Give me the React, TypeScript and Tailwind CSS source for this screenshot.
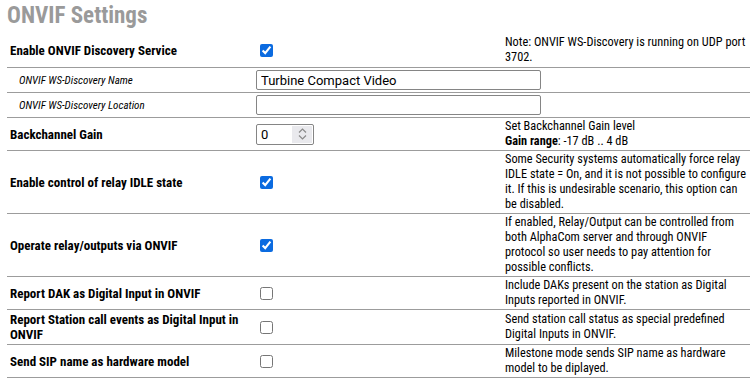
import React from "react";

const F = { fontFamily: '"Roboto Condensed", "Liberation Sans Narrow", Roboto, sans-serif' };

type Row = {
  label: string;
  sub?: boolean;
  control: React.ReactNode;
  desc?: React.ReactNode;
};

const Check = ({ on }: { on: boolean }) => (
  <input type="checkbox" defaultChecked={on} className="m-0 ml-[4px] block h-[13px] w-[13px] accent-[#0b6be0]" />
);

const rows: Row[] = [
  {
    label: "Enable ONVIF Discovery Service",
    control: <Check on />,
    desc: "Note: ONVIF WS-Discovery is running on UDP port 3702.",
  },
  {
    label: "ONVIF WS-Discovery Name",
    sub: true,
    control: (
      <input
        type="text"
        defaultValue="Turbine Compact Video"
        className="block h-[20px] w-[285px] rounded-[2px] border border-[#858585] px-[4px] text-[13px] text-black"
        style={{ fontFamily: "Roboto, sans-serif" }}
      />
    ),
  },
  {
    label: "ONVIF WS-Discovery Location",
    sub: true,
    control: (
      <input
        type="text"
        className="block h-[20px] w-[285px] rounded-[2px] border border-[#858585] px-[4px] text-[13px] text-black"
        style={{ fontFamily: "Roboto, sans-serif" }}
      />
    ),
  },
  {
    label: "Backchannel Gain",
    control: (
      <div className="flex h-[21px] w-[58px] items-center rounded-[2px] border border-[#858585] pl-[4px] pr-[1px]" style={{ fontFamily: "Roboto, sans-serif" }}>
        <span className="flex-1 text-[13px] text-black">0</span>
        <span className="flex h-[17px] w-[20px] flex-col items-center justify-center bg-[#e9e9ed]">
          <svg width="9" height="14" viewBox="0 0 9 14" fill="none" stroke="#8a8a8a" strokeWidth="1.2">
            <path d="M1 5.5 L4.5 2 L8 5.5" />
            <path d="M1 8.5 L4.5 12 L8 8.5" />
          </svg>
        </span>
      </div>
    ),
    desc: (
      <>
        Set Backchannel Gain level
        <br />
        <b>Gain range</b>: -17 dB .. 4 dB
      </>
    ),
  },
  {
    label: "Enable control of relay IDLE state",
    control: <Check on />,
    desc: "Some Security systems automatically force relay IDLE state = On, and it is not possible to configure it. If this is undesirable scenario, this option can be disabled.",
  },
  {
    label: "Operate relay/outputs via ONVIF",
    control: <Check on />,
    desc: "If enabled, Relay/Output can be controlled from both AlphaCom server and through ONVIF protocol so user needs to pay attention for possible conflicts.",
  },
  {
    label: "Report DAK as Digital Input in ONVIF",
    control: <Check on={false} />,
    desc: "Include DAKs present on the station as Digital Inputs reported in ONVIF.",
  },
  {
    label: "Report Station call events as Digital Input in ONVIF",
    control: <Check on={false} />,
    desc: "Send station call status as special predefined Digital Inputs in ONVIF.",
  },
  {
    label: "Send SIP name as hardware model",
    control: <Check on={false} />,
    desc: "Milestone mode sends SIP name as hardware model to be diplayed.",
  },
];

export default function App() {
  return (
    <div className="h-[383px] w-[756px] overflow-hidden bg-white pl-[7px] text-black" style={F}>
      <h1 className="pt-[3px] text-[23px] font-bold leading-[26px] text-[#9a9a9a]">ONVIF Settings</h1>
      <table className="mt-[5px] w-[743px] table-fixed border-collapse text-[12.3px] leading-[15px]">
        <colgroup>
          <col className="w-[246px]" />
          <col className="w-[249px]" />
          <col className="w-[248px]" />
        </colgroup>
        <tbody>
          {rows.map((r, i) => (
            <tr key={i} className={i === 0 ? "" : "border-t border-[#9c9c9c]"}>
              <td className={r.sub ? "py-[2px] pl-[12px] pr-[3px] align-middle text-[11px] italic" : "py-[2px] pl-[3px] pr-[3px] align-middle text-[13px] font-bold"}>
                {r.label}
              </td>
              <td className="py-[2px] pl-[3px] align-middle">{r.control}</td>
              <td className={i === 0 ? "pb-[2px] pl-[3px] pr-[3px] pt-[1px] align-middle" : "py-[1px] pl-[3px] pr-[3px] align-middle"}>{r.desc}</td>
            </tr>
          ))}
          <tr className="border-t border-[#9c9c9c]">
            <td colSpan={3} className="h-0 p-0" />
          </tr>
        </tbody>
      </table>
    </div>
  );
}
